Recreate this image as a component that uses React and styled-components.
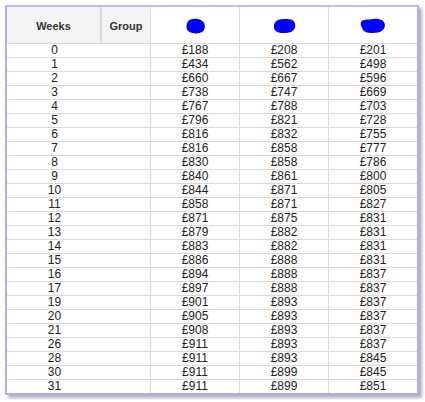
import React from "react";
import styled, { createGlobalStyle } from "styled-components";

const GlobalStyle = createGlobalStyle`
  body {
    margin: 0;
    padding: 5px;
    background: #fff;
    font-family: "Liberation Sans", Arial, sans-serif;
  }
`;

const Frame = styled.div`
  width: 410px;
  border: 2px solid #aeaef4;
  border-top-color: #bcbcf6;
  box-shadow: 3px 3px 3px rgba(0, 0, 0, 0.3);
  background: #fff;
`;

const Row = styled.div`
  display: grid;
  grid-template-columns: 95px 49px 89px 89px 88px;
  height: ${(p) => (p.$header ? "37px" : "14px")};
  box-sizing: border-box;
  border-bottom: 1px solid #d9d9d9;
  &:last-child {
    border-bottom: none;
    height: 13px;
  }
`;

const HeadCell = styled.div`
  display: flex;
  align-items: center;
  justify-content: center;
  background: ${(p) => (p.$grey ? "#f3f3f3" : "#fff")};
  border-right: ${(p) => (p.$thick ? "2px solid #dadada" : "1px solid #d9d9d9")};
  font-size: 11px;
  font-weight: bold;
  color: #333;
  padding-top: 2px;
  &:last-child {
    border-right: none;
  }
`;

const Cell = styled.div`
  display: flex;
  align-items: center;
  justify-content: center;
  border-right: ${(p) => (p.$open ? "none" : "1px solid #d9d9d9")};
  font-size: 12px;
  line-height: 13px;
  color: #222;
  &:last-child {
    border-right: none;
  }
`;

const Blob = ({ w, h, d }) => (
  <svg width={w} height={h} viewBox="0 0 24 16" preserveAspectRatio="none">
    <path d={d} fill="#0000ff" />
  </svg>
);

const blobs = [
  "M3 4 C5 0 14 0 18 2 C23 4 24 9 21 13 C18 16 9 16 5 14 C1 12 1 7 3 4 Z",
  "M2 5 C3 1 10 1 15 1 C21 1 24 4 23 9 C22 14 17 15 11 15 C5 15 1 13 1 9 C1 7 1 6 2 5 Z",
  "M1 4 C2 1 8 2 12 1 C17 0 23 2 23 7 C23 12 19 15 12 15 C6 15 3 14 2 10 C1 8 0 6 1 4 Z",
];

const rows = [
  [0, 188, 208, 201],
  [1, 434, 562, 498],
  [2, 660, 667, 596],
  [3, 738, 747, 669],
  [4, 767, 788, 703],
  [5, 796, 821, 728],
  [6, 816, 832, 755],
  [7, 816, 858, 777],
  [8, 830, 858, 786],
  [9, 840, 861, 800],
  [10, 844, 871, 805],
  [11, 858, 871, 827],
  [12, 871, 875, 831],
  [13, 879, 882, 831],
  [14, 883, 882, 831],
  [15, 886, 888, 831],
  [16, 894, 888, 837],
  [17, 897, 888, 837],
  [19, 901, 893, 837],
  [20, 905, 893, 837],
  [21, 908, 893, 837],
  [26, 911, 893, 837],
  [28, 911, 893, 845],
  [30, 911, 899, 845],
  [31, 911, 899, 851],
];

export default function App() {
  return (
    <>
      <GlobalStyle />
      <Frame>
        <Row $header>
          <HeadCell $grey $thick>Weeks</HeadCell>
          <HeadCell $grey>Group</HeadCell>
          <HeadCell>
            <Blob w={21} h={16} d={blobs[0]} />
          </HeadCell>
          <HeadCell>
            <Blob w={23} h={16} d={blobs[1]} />
          </HeadCell>
          <HeadCell>
            <Blob w={26} h={16} d={blobs[2]} />
          </HeadCell>
        </Row>
        {rows.map(([week, a, b, c]) => (
          <Row key={week}>
            <Cell $open>{week}</Cell>
            <Cell />
            <Cell>£{a}</Cell>
            <Cell>£{b}</Cell>
            <Cell>£{c}</Cell>
          </Row>
        ))}
      </Frame>
    </>
  );
}
